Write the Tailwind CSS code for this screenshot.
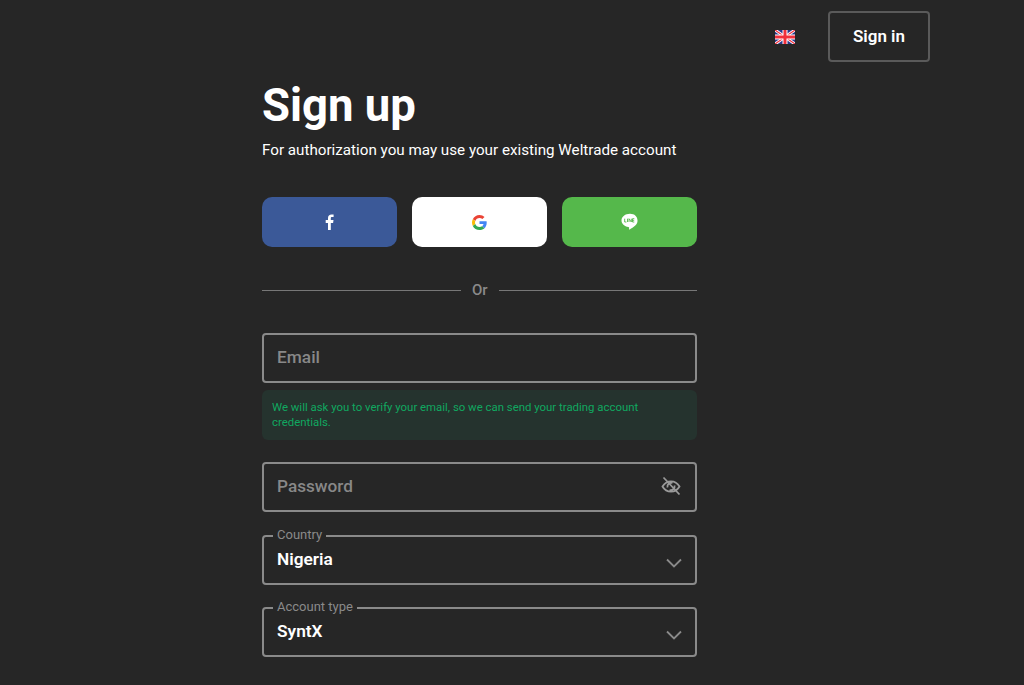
<!DOCTYPE html>
<html lang="en">

<head>
  <meta charset="UTF-8">
  <meta name="viewport" content="width=device-width, initial-scale=1.0">
  <script src="https://cdn.jsdelivr.net/npm/@tailwindcss/browser@4"></script>
  <title>Sign up</title>
</head>

<body class="bg-[#262626] h-[685px] overflow-hidden font-['Roboto',sans-serif] text-white">

  <header class="flex items-center justify-end h-[73px] pb-[1px] pr-[94px]">
    <svg class="mr-[33px] mt-[1px]" width="20" height="14" viewBox="0 0 20 14">
      <rect width="20" height="14" rx="1" fill="#26388c" />
      <path d="M0 0L20 14M20 0L0 14" stroke="#fff" stroke-width="3" />
      <path d="M0 0L20 14M20 0L0 14" stroke="#f0303c" stroke-width="1.200" />
      <path d="M10 0V14M0 7H20" stroke="#fff" stroke-width="5" />
      <path d="M10 0V14M0 7H20" stroke="#f0303c" stroke-width="3" />
    </svg>
    <button class="w-[102px] h-[51px] pt-[1px] border-2 border-[#5a5a5a] rounded-[4px] text-[17px] font-semibold">Sign in</button>
  </header>

  <main class="w-[435px] ml-[262px]">
    <h1 class="text-[45.500px] leading-[62px] font-bold pt-[2px]">Sign up</h1>
    <p class="text-[15.200px] leading-[24px] mt-[1px]">For authorization you may use your existing Weltrade account</p>

    <div class="grid grid-cols-3 gap-[15px] mt-[35px]">
      <button class="h-[50px] rounded-[10px] bg-[#3b5998] flex items-center justify-center">
        <svg width="9" height="16" viewBox="0 0 9 16">
          <path fill="#fff" d="M5.8 16V8.900h2.300l.4-2.800H5.800V4.400c0-.8.2-1.300 1.300-1.300h1.500V.6C8.300.5 7.500.5 6.500.5 4.400.5 3 1.700 3 4v2.100H.7v2.800H3V16z" />
        </svg>
      </button>
      <button class="h-[50px] rounded-[10px] bg-white flex items-center justify-center">
        <svg width="15" height="15" viewBox="0 0 48 48">
          <path fill="#EA4335" d="M24 9.500c3.500 0 6.700 1.200 9.200 3.600l6.900-6.900C35.900 2.400 30.500 0 24 0 14.600 0 6.500 5.400 2.600 13.200l8 6.200C12.500 13.600 17.800 9.500 24 9.500z" />
          <path fill="#4285F4" d="M47 24.500c0-1.600-.1-3.100-.4-4.500H24v9h12.900c-.6 3-2.200 5.500-4.800 7.200l7.700 6C44.300 37.900 47 31.800 47 24.500z" />
          <path fill="#FBBC05" d="M10.500 28.600c-.5-1.400-.8-3-.8-4.600s.3-3.200.8-4.600l-8-6.200C.900 16.500 0 20.100 0 24s.9 7.500 2.600 10.800l7.900-6.200z" />
          <path fill="#34A853" d="M24 48c6.500 0 11.900-2.100 15.900-5.800l-7.700-6c-2.200 1.400-4.900 2.300-8.200 2.300-6.200 0-11.500-4.200-13.400-9.800l-8 6.200C6.500 42.600 14.600 48 24 48z" />
        </svg>
      </button>
      <button class="h-[50px] rounded-[10px] bg-[#55b84b] flex items-center justify-center">
        <svg width="18" height="18" viewBox="0 0 18 18">
          <path fill="#fff" d="M9 .8C4.300.8.500 3.700.5 7.500c0 3.300 2.900 6 6.900 6.500.3.100.6.200.7.500.1.200 0 .6 0 .8l-.1.700c0 .2-.2.800.7.400.8-.3 4.600-2.700 6.300-4.600 1.200-1.300 1.500-2.700 1.500-4.300C16.500 3.700 13.700.8 9 .8z" />
          <path fill="none" stroke="#55b84b" stroke-width=".9" d="M3.700 5.700v3.300h1.700M6.500 5.700v3.300M8 9V5.700l2.300 3.300V5.700M13.300 5.700h-1.800V9h1.800M11.500 7.300h1.700" />
        </svg>
      </button>
    </div>

    <div class="flex items-center gap-[11px] mt-[30px] h-[26px]">
      <div class="w-[199px] h-px bg-[#777]"></div>
      <span class="text-[15px] font-medium text-[#8a8a8a]">Or</span>
      <div class="flex-1 h-px bg-[#777]"></div>
    </div>

    <div class="mt-[30px] h-[50px] border-2 border-[#8a8a8a] rounded-[4px] flex items-center px-[13px]">
      <span class="text-[17.300px] font-medium text-[#888]">Email</span>
    </div>
    <div class="mt-[7px] h-[50px] rounded-[6px] bg-[#25332e] px-[10px] pt-[10px] text-[11.400px] leading-[15px] text-[#10a860]">
      We will ask you to verify your email, so we can send your trading account credentials.
    </div>

    <div class="mt-[22px] h-[50px] border-2 border-[#8a8a8a] rounded-[4px] flex items-center justify-between pl-[13px] pr-[14px]">
      <span class="text-[17.200px] font-medium text-[#888] -mt-[1px]">Password</span>
      <svg class="-mt-[2px]" width="20" height="20" viewBox="0 0 20 20" fill="none" stroke="#9a9a9a" stroke-width="1.800">
        <path d="M1.500 10.500C3.500 7 6.500 5.300 10 5.300s6.500 1.700 8.500 5.200c-2 3.500-5 5.200-8.500 5.200s-6.500-1.700-8.500-5.200z" />
        <path d="M6.500 11.500a3.800 3.800 0 0 1 5-4.500M13.500 9.500a3.800 3.800 0 0 1-5 4.500" />
        <path d="M2.500 1.500L18.500 18.500" />
      </svg>
    </div>

    <div class="relative mt-[23px] h-[50px] border-2 border-[#8a8a8a] rounded-[4px] flex items-center justify-between pl-[13px] pr-[13px]">
      <label class="absolute -top-[10px] left-[9px] px-[4px] bg-[#262626] text-[13px] leading-[15px] text-[#8a8a8a]">Country</label>
      <span class="text-[17.300px] font-semibold">Nigeria</span>
      <svg class="mt-[6px]" width="16" height="10" viewBox="0 0 16 10" fill="none" stroke="#8a8a8a" stroke-width="1.800">
        <path d="M1 1.500L8 8.500L15 1.500" />
      </svg>
    </div>

    <div class="relative mt-[22px] h-[50px] border-2 border-[#8a8a8a] rounded-[4px] flex items-center justify-between pl-[13px] pr-[13px]">
      <label class="absolute -top-[10px] left-[9px] px-[4px] bg-[#262626] text-[13px] leading-[15px] text-[#8a8a8a]">Account type</label>
      <span class="text-[17.300px] font-semibold">SyntX</span>
      <svg class="mt-[6px]" width="16" height="10" viewBox="0 0 16 10" fill="none" stroke="#8a8a8a" stroke-width="1.800">
        <path d="M1 1.500L8 8.500L15 1.500" />
      </svg>
    </div>
  </main>

</body>

</html>
